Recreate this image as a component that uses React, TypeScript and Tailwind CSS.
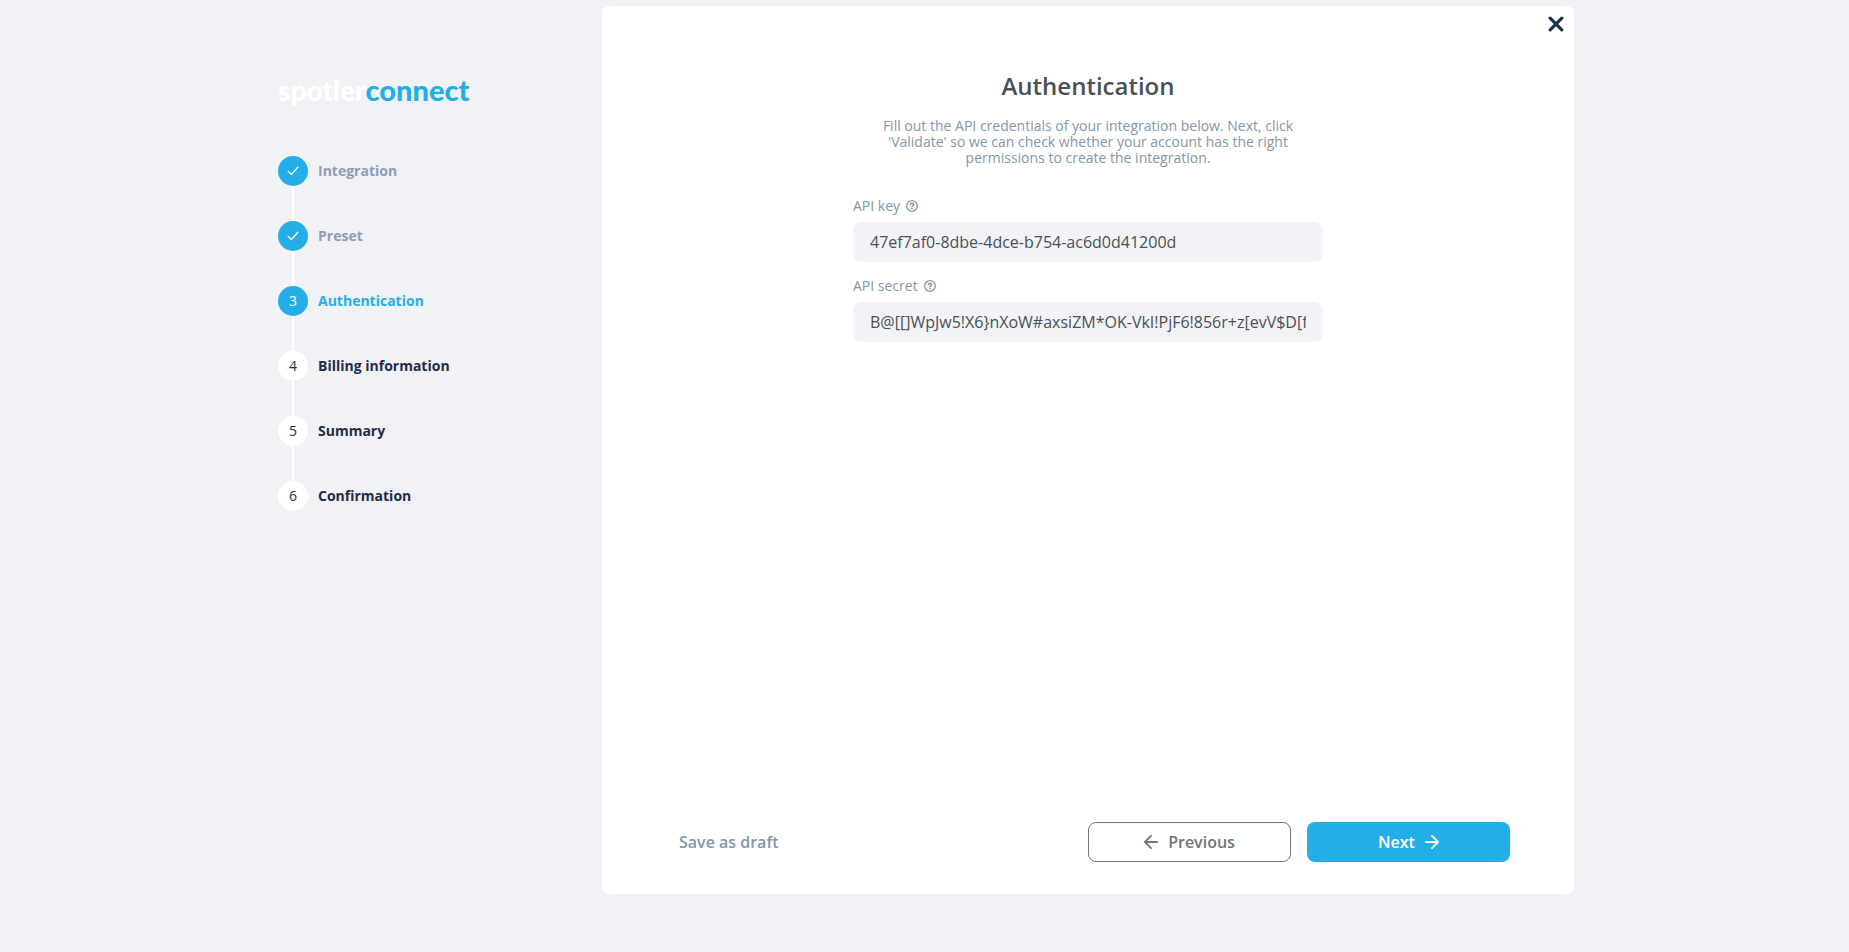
import { useState } from "react";

type StepState = "done" | "active" | "todo";

const steps: { label: string; state: StepState }[] = [
  { label: "Integration", state: "done" },
  { label: "Preset", state: "done" },
  { label: "Authentication", state: "active" },
  { label: "Billing information", state: "todo" },
  { label: "Summary", state: "todo" },
  { label: "Confirmation", state: "todo" },
];

const circleStyles: Record<StepState, string> = {
  done: "bg-[#24aee8] text-white",
  active: "bg-[#24aee8] text-white",
  todo: "bg-white text-[#252d4b]",
};

const labelStyles: Record<StepState, string> = {
  done: "text-[#8f9bb8]",
  active: "text-[#24aee8]",
  todo: "text-[#252b48]",
};

function CheckIcon() {
  return (
    <svg viewBox="0 0 12 10" className="h-[10px] w-3" fill="none" stroke="currentColor" strokeWidth="1.3" strokeLinecap="round" strokeLinejoin="round" aria-hidden="true">
      <path d="M1.2 5.2 4.4 8.6 10.8 1.2" />
    </svg>
  );
}

function HelpIcon() {
  return (
    <svg viewBox="0 0 12 12" className="size-3" fill="none" stroke="currentColor" strokeLinecap="round" strokeLinejoin="round" aria-hidden="true">
      <circle cx="6" cy="6" r="5.35" strokeWidth="1.3" />
      <path d="M4.4 4.6C4.5 3.7 5.1 3.2 6 3.2s1.7.5 1.7 1.35C7.7 5.6 6 5.7 6 6.8" strokeWidth="1.5" />
      <circle cx="6" cy="8.7" r=".85" fill="currentColor" stroke="none" />
    </svg>
  );
}

function ArrowIcon({ direction }: { direction: "left" | "right" }) {
  return (
    <svg viewBox="0 0 14 14" className="size-[14px]" fill="none" stroke="currentColor" strokeWidth="1.8" strokeLinecap="round" strokeLinejoin="round" aria-hidden="true">
      {direction === "left" ? <path d="M13.1 7H.9M7 .9.9 7 7 13.1" /> : <path d="M.9 7h12.2M7 .9 13.1 7 7 13.1" />}
    </svg>
  );
}

function Field({ id, label, initial }: { id: string; label: string; initial: string }) {
  const [value, setValue] = useState(initial);
  return (
    <div>
      <label htmlFor={id} className="flex h-8 items-center gap-1.5 text-sm text-[#8496a9]">
        {label}
        <HelpIcon />
      </label>
      <input
        id={id}
        type="text"
        value={value}
        onChange={(e) => setValue(e.target.value)}
        className="block h-10 w-full rounded-lg border border-[#f1f3f7] bg-[#f2f3f7] px-4 text-base text-[#495057] outline-none focus:border-[#24aee8]"
      />
    </div>
  );
}

export default function App() {
  return (
    <div className="min-h-screen bg-[#f0f2f6] pt-1.5 pl-[3px] font-['Open_Sans',sans-serif]">
      <div className="mx-auto flex max-w-[1296px]">
        <aside className="w-[324px] shrink-0 pt-[66px]">
          <a href="#" className="block font-['Lato',sans-serif] text-[28px] leading-9 font-black text-white">
            spotler<span className="text-[29px] text-[#24aee8]">connect</span>
          </a>
          <ol className="mt-12">
            {steps.map((step, i) => (
              <li key={step.label} className="flex gap-2.5">
                <div className="flex flex-col items-center">
                  <span className={`flex size-[30px] items-center justify-center rounded-full text-sm ${circleStyles[step.state]}`}>
                    {step.state === "done" ? <CheckIcon /> : i + 1}
                  </span>
                  {i < steps.length - 1 && <span className="h-[35px] w-0.5 bg-white" />}
                </div>
                <span className={`text-sm leading-[30px] font-bold ${labelStyles[step.state]}`}>{step.label}</span>
              </li>
            ))}
          </ol>
        </aside>

        <main className="relative flex min-h-[calc(100vh-64px)] min-w-0 flex-1 flex-col rounded-lg bg-white px-16 pt-16 pb-8">
          <button type="button" aria-label="Close" className="absolute top-2.5 right-2.5 text-[#1f3044]">
            <svg viewBox="0 0 16 16" className="size-4" fill="none" stroke="currentColor" strokeWidth="3.2" strokeLinecap="round" aria-hidden="true">
              <path d="M2.2 2.2 13.8 13.8M13.8 2.2 2.2 13.8" />
            </svg>
          </button>

          <form className="mx-auto w-full max-w-[470px]">
            <h1 className="text-center text-2xl leading-8 font-semibold text-[#495057]">Authentication</h1>
            <p className="mx-auto mt-4 max-w-[430px] text-center text-sm leading-4 text-[#8496a9]">
              Fill out the API credentials of your integration below. Next, click 'Validate' so we can check whether your account has the right
              permissions to create the integration.
            </p>
            <div className="mt-6 flex flex-col gap-2">
              <Field id="api-key" label="API key" initial="47ef7af0-8dbe-4dce-b754-ac6d0d41200d" />
              <Field id="api-secret" label="API secret" initial="B@[[]WpJw5!X6}nXoW#axsiZM*OK-VkI!PjF6!856r+z[evV$D[f" />
            </div>
          </form>

          <div className="mt-auto grid grid-cols-2 text-base font-semibold">
            <button type="button" className="h-10 justify-self-start px-[13px] text-[#8496a9]">
              Save as draft
            </button>
            <div className="grid grid-cols-2 gap-4">
              <button type="button" className="flex h-10 items-center justify-center gap-2.5 rounded-lg border border-[#6c757d] text-[#6c757d]">
                <ArrowIcon direction="left" />
                Previous
              </button>
              <button type="button" className="flex h-10 items-center justify-center gap-2.5 rounded-lg bg-[#24aee8] text-white">
                Next
                <ArrowIcon direction="right" />
              </button>
            </div>
          </div>
        </main>
      </div>
    </div>
  );
}
